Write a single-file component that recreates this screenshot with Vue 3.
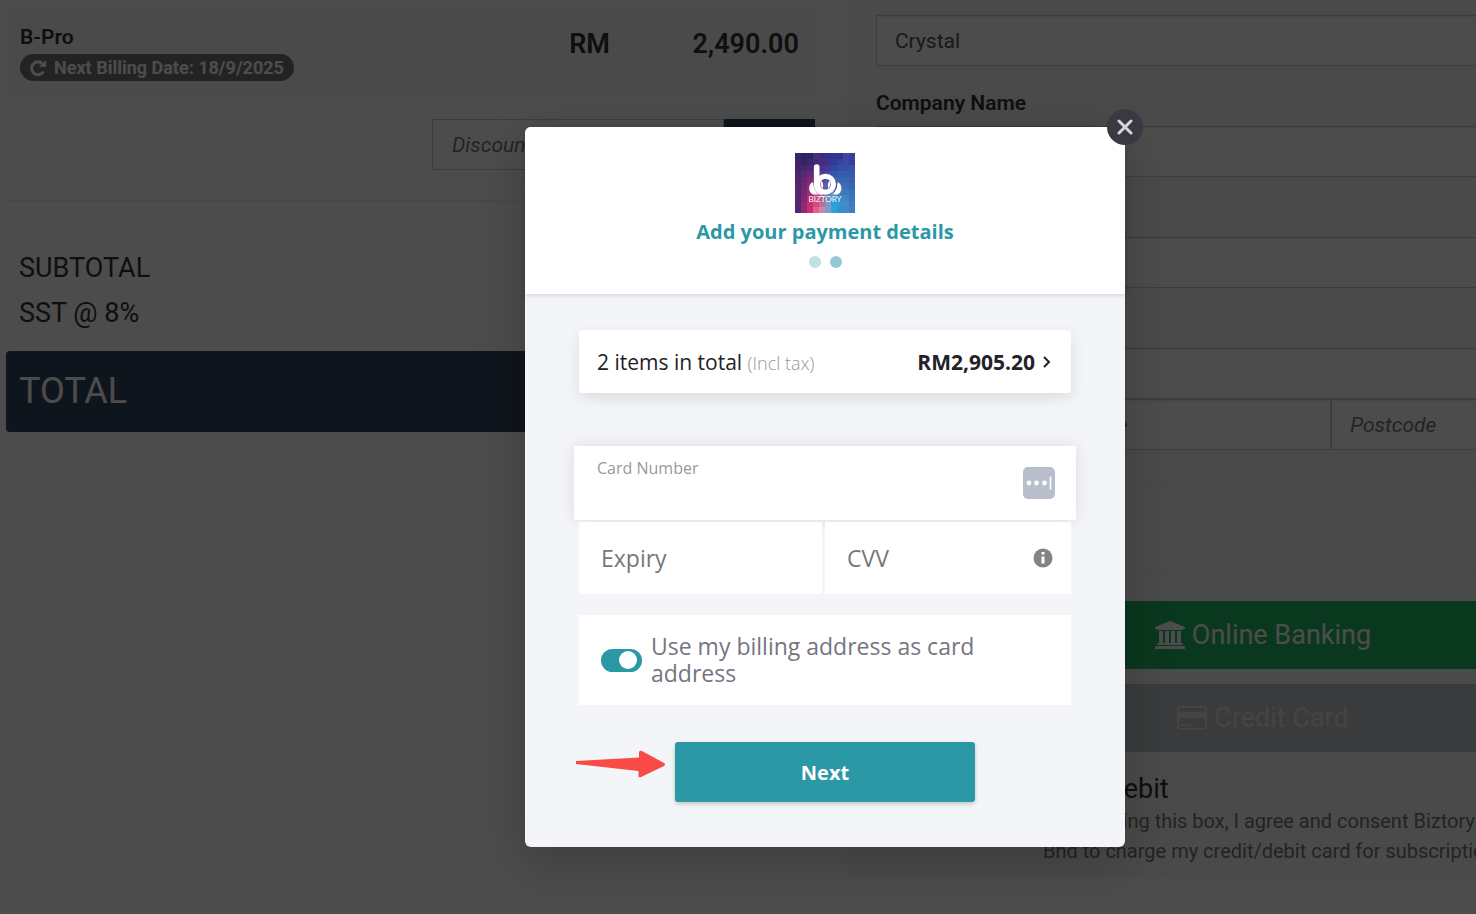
<template>
  <div class="page">
    <main class="checkout">
      <section class="summary">
        <div class="previous-item"></div>
        <div class="item">
          <div class="item-info">
            <h2>B-Pro</h2>
            <span class="badge">
              <svg width="18" height="18" viewBox="0 0 18 18">
                <path d="M14.500 12.500 A6.400 6.400 0 1 1 13.400 4.600" stroke="currentColor" stroke-width="3.200" fill="none"/>
                <path d="M17 1 V8 H10 Z" fill="currentColor"/>
              </svg>
              Next Billing Date: {{ nextBilling }}
            </span>
          </div>
          <span class="currency">RM</span>
          <span class="amount">2,490.00</span>
        </div>
        <div class="discount">
          <input v-model="discount" type="text" placeholder="Discount Code" aria-label="Discount Code">
          <button type="button">Apply</button>
        </div>
        <hr>
        <div class="line">SUBTOTAL</div>
        <div class="line">SST @ 8%</div>
        <div class="total">TOTAL</div>
      </section>

      <section class="billing">
        <input v-model="name" class="field" type="text" aria-label="Name">
        <label for="company">Company Name</label>
        <input id="company" class="field" type="text">
        <label for="email">Email</label>
        <input id="email" class="field" type="text">
        <label for="address">Address</label>
        <input id="address" class="field" type="text">
        <div class="address-row">
          <input class="field" type="text" placeholder="City" aria-label="City">
          <input class="field" type="text" placeholder="State" aria-label="State">
          <input class="field" type="text" placeholder="Postcode" aria-label="Postcode">
        </div>
        <hr class="first">
        <hr class="second">
        <div class="methods">
          <button type="button" class="method banking">
            <svg width="30" height="28" viewBox="0 0 30 28" fill="currentColor">
              <path d="M15 0 L30 6 V8 H28 Q28 9 27 9 H3 Q2 9 2 8 H0 V6 Z"/>
              <path d="M4 10 H8 V22 H10 V10 H14 V22 H16 V10 H20 V22 H22 V10 H26 V22 H27 Q28 22 28 24 H2 Q2 22 3 22 H4 Z"/>
              <path d="M1 25 H29 L30 26 V28 H0 V26 Z"/>
            </svg>
            Online Banking
          </button>
          <button type="button" class="method card">
            <svg width="30" height="24" viewBox="0 0 30 24">
              <rect x="1" y="1" width="28" height="22" rx="2" fill="none" stroke="currentColor" stroke-width="2"/>
              <path d="M1 6 H29 V12 H1 Z M4 18 H8 V20 H4 Z M10 18 H16 V20 H10 Z" fill="currentColor"/>
            </svg>
            Credit Card
          </button>
          <h3>Auto Debit</h3>
          <p>By checking this box, I agree and consent Biztory<br>Bhd to charge my credit/debit card for subscription</p>
        </div>
      </section>
    </main>

    <div class="overlay">
      <div class="modal" role="dialog" aria-labelledby="modal-title">
        <button type="button" class="close" aria-label="Close">
          <svg width="16" height="16" viewBox="0 0 16 16">
            <path d="M2 2 L14 14 M14 2 L2 14" stroke="#d6d6d8" stroke-width="3" stroke-linecap="round"/>
          </svg>
        </button>

        <header class="modal-header">
          <svg class="logo" width="60" height="60" viewBox="0 0 60 60">
            <g shape-rendering="crispEdges">
              <template v-for="(row, y) in mosaic" :key="y">
                <rect
                  v-for="(color, x) in row"
                  :key="x"
                  :x="x * 6"
                  :y="y * 6"
                  width="6"
                  height="6"
                  :fill="'#' + color"
                />
              </template>
            </g>
            <path d="M18 29 A7 7 0 0 0 18 41.500 H24 L20 36 Z" fill="white"/>
            <path d="M42.500 29 A7 7 0 0 1 42.500 41.500 H36 L41 36 Z" fill="white"/>
            <path d="M19 29 Q18.500 37 24 41.500 M42 29 Q42 37 37 41.500" fill="none" stroke="#6a3f8e" stroke-width="1"/>
            <circle cx="30.500" cy="31.200" r="8" fill="none" stroke="white" stroke-width="5"/>
            <path d="M21.700 14 V32 Q21.700 37 26 39" fill="none" stroke="white" stroke-width="5.600" stroke-linecap="round"/>
            <path d="M26 27.500 Q29 30 27.800 35.500 Q24.500 32 26 27.500 M35 27.500 Q32 30 33.200 35.500 Q36.500 32 35 27.500" fill="white"/>
            <text x="30" y="49" text-anchor="middle">BIZTORY</text>
          </svg>
          <h1 id="modal-title">Add your payment details</h1>
          <div class="steps">
            <span></span>
            <span class="current"></span>
          </div>
        </header>

        <form class="modal-body" @submit.prevent>
          <button type="button" class="order">
            <span class="order-items">2 items in total <small>(Incl tax)</small></span>
            <strong>RM2,905.20</strong>
            <svg width="8" height="12" viewBox="0 0 8 12">
              <path d="M1 1 L6 6 L1 11" stroke="#222228" stroke-width="2" fill="none"/>
            </svg>
          </button>

          <div class="card-number">
            <div class="card-input">
              <label for="card-number">Card Number</label>
              <input id="card-number" v-model="cardNumber" type="text" inputmode="numeric">
            </div>
            <svg width="32" height="32" viewBox="0 0 32 32">
              <rect width="32" height="32" rx="5" fill="#b8bfcb"/>
              <circle cx="6" cy="16" r="2.400" fill="white"/>
              <circle cx="13.500" cy="16" r="2.400" fill="white"/>
              <circle cx="21.500" cy="16" r="2.400" fill="white"/>
              <path d="M27.500 9.500 V22.500" stroke="white" stroke-width="1.500"/>
            </svg>
          </div>

          <div class="card-row">
            <div class="card-cell">
              <input v-model="expiry" type="text" placeholder="Expiry" aria-label="Expiry">
            </div>
            <div class="card-cell">
              <input v-model="cvv" type="text" placeholder="CVV" aria-label="CVV">
              <svg width="20" height="20" viewBox="0 0 20 20">
                <circle cx="10" cy="10" r="9.500" fill="#838383"/>
                <path d="M8.500 4 H11.500 V6.500 H8.500 Z M8.500 8.500 H11.500 V15.500 H8.500 Z" fill="white"/>
              </svg>
            </div>
          </div>

          <label class="same-address">
            <input v-model="useBilling" type="checkbox">
            <span>Use my billing address as card address</span>
          </label>

          <div class="actions">
            <svg class="arrow" width="90" height="28" viewBox="0 0 90 28">
              <path d="M0 11 L63 7.500 V2 Q64 0 66 1 L88 13 Q90 14.500 88 16 L65 27 Q62 28 62.500 26 V21 L0 14 Z" fill="#f84b45"/>
            </svg>
            <button type="submit" class="next">Next</button>
          </div>
        </form>
      </div>
    </div>
  </div>
</template>

<script setup>
import { ref } from 'vue'

const name = ref('Crystal')
const nextBilling = ref('18/9/2025')
const discount = ref('')
const cardNumber = ref('')
const expiry = ref('')
const cvv = ref('')
const useBilling = ref(true)

// logo background, 10 x 10 tiles
const mosaic = [
  ['35256a', '2b2260', '2d2465', '41307a', '42297a', '3a2f88', '32338f', '2c3692', '3f459e', '36409c'],
  ['3c2569', '34235f', '3c266c', '432977', '4a2b82', '3c3190', '2f3b99', '3343a0', '3a4aa3', '353f9d'],
  ['44256a', '44266d', '4b2775', '57287b', '4e2f8a', '3d3c98', '34479f', '3151a6', '354fa5', '3452a6'],
  ['4b266b', '582770', '652a78', '68307e', '5a3a8c', '424a9f', '3856a7', '345cac', '385baa', '3858a8'],
  ['50276b', '662870', '7c2a75', '803278', '6d438e', '4b5aa8', '3b65b0', '3a66b1', '3d64ae', '3a5eab'],
  ['54276b', '6e2870', '8d2a72', '9d3478', '824f94', '5168ae', '3d76ba', '3a72b8', '3e6db4', '3766af'],
  ['55276c', '772870', 'a02c72', 'b63a78', '95589a', '5878b6', '3f86c4', '3a80c0', '3f76b9', '3a6eb5'],
  ['54276d', '832870', 'b22d73', 'c94078', 'a9649c', '668bc0', '3897d0', '3b89c8', '4182c2', '3a75ba'],
  ['51276d', '902a71', 'c72f74', 'd84a7c', 'bb6f9d', '7d98c4', '2ba0d9', '3a91cf', '458bc8', '3b7bbe'],
  ['50276c', '8f2b72', 'c52f73', 'ea5c88', 'cf86a8', '7b9dca', '28a5dc', '3393d2', '4388c8', '427fc1']
]
</script>

<style>
html,
body {
  margin: 0;
  overflow: hidden;
}

#app {
  overflow: hidden;
}
</style>

<style scoped>
* {
  box-sizing: border-box;
}

button,
input {
  font-family: inherit;
  margin: 0;
}

/* the checkout runs wider than the viewport */
.page {
  position: relative;
  width: calc(100% + 174px);
  min-height: 100vh;
  overflow: hidden;
  background: white;
  color: #333;
  font-family: Roboto, "Liberation Sans", sans-serif;
  font-size: 21px;
}

.checkout {
  display: grid;
  grid-template-columns: minmax(0, 57fr) minmax(0, 47fr);
  align-items: start;
  gap: 31px;
  padding: 0 137px 0 6px;
}

.previous-item {
  height: 2px;
  background: #f7f7f7;
}

.item {
  display: flex;
  margin-top: 5px;
  padding: 16px 16px 15px 14px;
  background: #f7f7f7;
  border-radius: 4px;
}

.item-info {
  flex: 1;
}

.item h2 {
  margin: 0;
  font-size: 21px;
  font-weight: 600;
  line-height: 28px;
}

.badge {
  display: flex;
  align-items: center;
  gap: 7px;
  width: fit-content;
  height: 27px;
  margin-top: 3px;
  padding: 0 10px 0 9px;
  border-radius: 14px;
  background: #777;
  color: white;
  font-size: 18px;
  font-weight: 700;
}

.currency,
.amount {
  font-size: 27px;
  font-weight: 600;
  line-height: 42px;
}

.amount {
  width: 189px;
  text-align: right;
}

.discount {
  display: flex;
  width: 383px;
  height: 51px;
  margin: 23px 0 30px auto;
}

.discount input {
  flex: 1;
  min-width: 0;
  padding: 0 19px;
  border: 1px solid #ccc;
  font-size: 21px;
}

.discount button {
  width: 91px;
  border: 0;
  background: #34495e;
  color: white;
  font-size: 21px;
}

input::placeholder {
  color: #777;
  opacity: 1;
}

.discount input::placeholder,
.field::placeholder {
  font-style: italic;
}

hr {
  margin: 0;
  border: 0;
  border-top: 1px solid #eee;
}

.summary hr {
  margin-bottom: 45px;
}

.line {
  padding-left: 13px;
  font-size: 27px;
  line-height: 45px;
}

.total {
  margin-top: 15px;
  padding-left: 13px;
  border-radius: 4px;
  background: #34495e;
  color: white;
  font-size: 36px;
  line-height: 81px;
}

.billing {
  display: flex;
  flex-direction: column;
  padding: 15px 30px 12px;
  background: #f7f7f7;
}

.field {
  width: 100%;
  height: 51px;
  padding: 0 18px;
  border: 1px solid #ccc;
  background: white;
  box-shadow: inset 0 1px 1px rgba(0, 0, 0, 0.08);
  color: #555;
  font-size: 21px;
}

.billing label {
  padding: 22px 0 8px;
  font-weight: 600;
  line-height: 30px;
}

.address-row {
  display: grid;
  grid-template-columns: 61fr 89fr 50fr;
}

.first {
  margin-top: 30px;
}

.second {
  margin: 89px 0 30px;
}

.methods {
  display: flex;
  flex-direction: column;
  margin-left: 167px;
  white-space: nowrap;
}

.method {
  display: flex;
  align-items: center;
  justify-content: center;
  gap: 7px;
  height: 68px;
  margin-bottom: 15px;
  border: 0;
  color: white;
  font-size: 27px;
}

.banking {
  background: #22bb66;
}

.card {
  background: #c3c5c8;
  color: #e5e5e5;
}

.methods h3 {
  margin: 5px 0 0;
  font-size: 27px;
  font-weight: 400;
  line-height: 34px;
}

.methods p {
  margin: 0;
  color: #777;
  font-size: 20px;
  line-height: 30px;
}

.overlay {
  position: absolute;
  inset: 0;
  display: flex;
  align-items: flex-start;
  justify-content: center;
  padding-top: 127px;
  background: rgba(0, 0, 0, 0.7);
}

.modal {
  position: relative;
  width: 600px;
  border-radius: 6px;
  background: #f4f5f9;
  box-shadow: 0 15px 50px rgba(0, 0, 0, 0.2);
  color: #222228;
  font-family: "Open Sans", "Noto Sans", sans-serif;
}

.close {
  position: absolute;
  top: -18px;
  right: -18px;
  display: flex;
  align-items: center;
  justify-content: center;
  width: 36px;
  height: 36px;
  padding: 0;
  border: 0;
  border-radius: 50%;
  background: #393941;
}

.modal-header {
  display: flex;
  flex-direction: column;
  align-items: center;
  padding: 26px 0;
  border-radius: 6px 6px 0 0;
  background: white;
  box-shadow: 0 1px 4px rgba(0, 0, 0, 0.15);
}

.logo text {
  fill: white;
  font-family: Lato, sans-serif;
  font-size: 8px;
}

.modal-header h1 {
  margin: 4px 0 10px;
  color: #2b98a5;
  font-size: 20px;
  font-weight: 700;
  line-height: 29px;
}

.steps {
  display: flex;
  gap: 9px;
}

.steps span {
  width: 12px;
  height: 12px;
  border-radius: 50%;
  background: #bfe0e4;
}

.steps .current {
  background: #94cbd2;
}

.modal-body {
  display: flex;
  flex-direction: column;
  padding: 36px 54px 45px;
}

.order {
  display: flex;
  align-items: center;
  height: 63px;
  padding: 0 20px 0 18px;
  border: 0;
  border-radius: 3px;
  background: white;
  box-shadow: 0 5px 15px rgba(0, 0, 0, 0.1);
  color: #222228;
  font-size: 21px;
}

.order-items {
  flex: 1;
  text-align: left;
}

.order small {
  color: #999;
  font-size: 18px;
  font-weight: 300;
}

.order strong {
  margin-right: 8px;
}

.card-number {
  display: flex;
  align-items: center;
  height: 74px;
  margin: 53px -5px 2px;
  padding: 0 21px 0 23px;
  background: white;
  box-shadow: 0 0 15px rgba(0, 0, 0, 0.1);
}

.card-input {
  display: flex;
  flex: 1;
  flex-direction: column;
}

.card-input label {
  color: #999;
  font-size: 16px;
  line-height: 22px;
}

.card-input input,
.card-cell input {
  min-width: 0;
  padding: 0;
  border: 0;
  outline: 0;
  background: transparent;
  font-size: 23px;
}

.card-input input {
  height: 30px;
}

.card-row {
  display: grid;
  grid-template-columns: minmax(0, 81fr) minmax(0, 82fr);
  gap: 3px;
}

.card-cell {
  display: flex;
  align-items: center;
  height: 72px;
  padding: 0 18px 0 22px;
  background: white;
}

.card-cell input {
  flex: 1;
}

.same-address {
  display: flex;
  align-items: center;
  gap: 9px;
  height: 90px;
  margin: 21px 0 37px;
  padding: 0 80px 0 22px;
  background: white;
  color: #757580;
  font-size: 23px;
  line-height: 27px;
}

.same-address input {
  flex: none;
  display: flex;
  align-items: center;
  justify-content: flex-end;
  width: 41px;
  height: 23px;
  padding: 0 5px;
  border-radius: 12px;
  background: #2b98a5;
  appearance: none;
}

.same-address input::after {
  width: 18px;
  height: 18px;
  border-radius: 50%;
  background: white;
  content: "";
}

.same-address input:not(:checked) {
  justify-content: flex-start;
  background: #bbb;
}

.actions {
  position: relative;
  display: flex;
  justify-content: center;
}

.arrow {
  position: absolute;
  top: 8px;
  left: -3px;
}

.next {
  width: 300px;
  height: 60px;
  border: 0;
  border-radius: 3px;
  background: #2b98a5;
  box-shadow: 0 2px 4px rgba(0, 0, 0, 0.2);
  color: white;
  font-size: 20px;
  font-weight: 700;
}
</style>
